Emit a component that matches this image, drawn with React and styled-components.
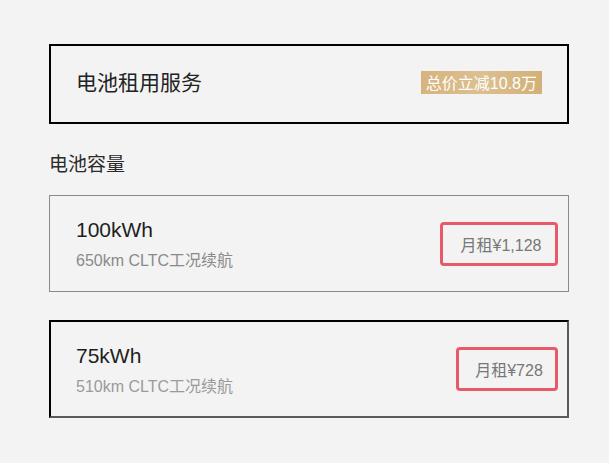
import React from "react";
import styled, { createGlobalStyle } from "styled-components";

const Global = createGlobalStyle`
  html, body { margin: 0; padding: 0; background: #f3f3f3; }
  body { font-family: "Liberation Sans", "Noto Sans CJK SC", sans-serif; }
`;

const Page = styled.div`
  padding: 44px 0 0 49px;
  width: 520px;
  display: flex;
  flex-direction: column;
`;

const ServiceCard = styled.div`
  box-sizing: border-box;
  height: 80px;
  border: 2px solid #000;
  display: flex;
  align-items: center;
  justify-content: space-between;
  padding: 0 25px 0 25px;
`;

const ServiceTitle = styled.div`
  font-size: 21px;
  color: #222;
  margin-top: -6px;
`;

const Badge = styled.div`
  height: 23px;
  padding: 0 5px;
  display: flex;
  align-items: center;
  font-size: 16px;
  color: #fff;
  white-space: nowrap;
  margin-top: -4px;
  background: linear-gradient(90deg, #d6b47c 0%, #dcc091 50%, #d2b077 100%);
`;

const SectionLabel = styled.div`
  font-size: 19px;
  color: #2a2a2a;
  margin: 29px 0 18px 0;
  line-height: 24px;
`;

const OptionCard = styled.div`
  box-sizing: border-box;
  height: ${(p) => (p.$selected ? "98px" : "97px")};
  display: flex;
  align-items: center;
  justify-content: space-between;
  border: ${(p) => (p.$selected ? "2px solid #000" : "1px solid #8a8a8a")};
  border-right-color: ${(p) => (p.$selected ? "#5a5a5a" : "#8a8a8a")};
  border-bottom-color: ${(p) => (p.$selected ? "#5a5a5a" : "#8a8a8a")};
  padding-left: ${(p) => (p.$selected ? "25px" : "26px")};
  padding-right: ${(p) => (p.$selected ? "9px" : "10px")};
  margin-bottom: 28px;
`;

const Info = styled.div`
  display: flex;
  flex-direction: column;
  gap: 9px;
  margin-top: 2px;
`;

const Capacity = styled.div`
  font-size: 21px;
  color: #1e1e1e;
  line-height: 24px;
`;

const Range = styled.div`
  font-size: 16px;
  color: ${(p) => (p.$selected ? "#9a9a9a" : "#8a8a8a")};
  line-height: 20px;
`;

const Price = styled.div`
  box-sizing: border-box;
  height: 44px;
  padding: 0 8px 0 12px;
  display: flex;
  align-items: center;
  justify-content: center;
  white-space: nowrap;
  border: 3px solid #e8596a;
  border-radius: 4px;
  font-size: 16px;
  color: #777;
`;

const options = [
  { kwh: "100kWh", range: "650km CLTC工况续航", price: "月租¥1,128", selected: false, w: 118 },
  { kwh: "75kWh", range: "510km CLTC工况续航", price: "月租¥728", selected: true, w: 102 },
];

export default function App() {
  return (
    <>
      <Global />
      <Page>
        <ServiceCard>
          <ServiceTitle>电池租用服务</ServiceTitle>
          <Badge>总价立减10.8万</Badge>
        </ServiceCard>
        <SectionLabel>电池容量</SectionLabel>
        {options.map((o) => (
          <OptionCard key={o.kwh} $selected={o.selected}>
            <Info>
              <Capacity>{o.kwh}</Capacity>
              <Range $selected={o.selected}>{o.range}</Range>
            </Info>
            <Price style={{ width: o.w }}>{o.price}</Price>
          </OptionCard>
        ))}
      </Page>
    </>
  );
}
